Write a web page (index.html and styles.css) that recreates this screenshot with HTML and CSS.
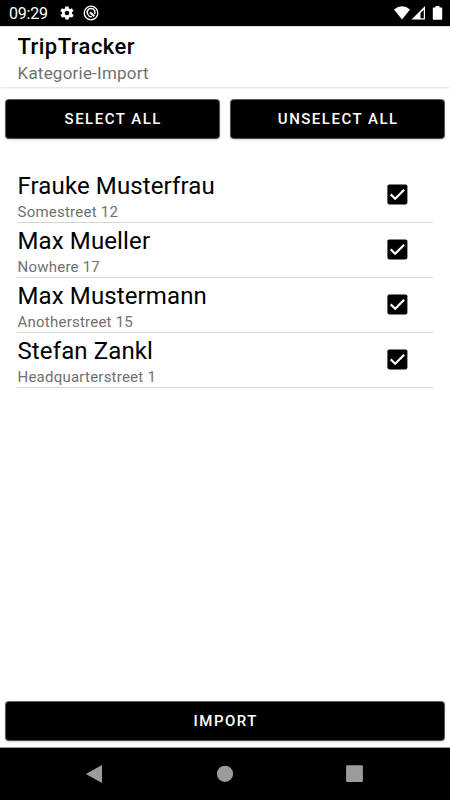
FILE: index.html
```html
<!DOCTYPE html>
<html lang="de">
<head>
<meta charset="utf-8">
<title>TripTracker</title>
<link rel="stylesheet" href="styles.css">
</head>
<body>
<div class="screen">
  <div class="status">
    <span class="clock">09:29</span>
    <svg class="gear" viewBox="0 0 24 24"><path fill="#fff" fill-rule="evenodd" d="M19.4 13c0-.3.1-.6.1-1s0-.7-.1-1l2.1-1.600c.2-.2.2-.4.1-.6l-2-3.500c-.1-.2-.4-.3-.6-.2l-2.500 1c-.5-.4-1.100-.7-1.700-1l-.4-2.600c0-.2-.2-.4-.5-.4h-4c-.2 0-.5.2-.5.4l-.4 2.600c-.6.300-1.200.6-1.700 1l-2.500-1c-.2-.1-.5 0-.6.2l-2 3.500c-.1.2-.1.5.1.6L4.600 11c0 .3-.1.7-.1 1s0 .7.1 1l-2.100 1.600c-.2.2-.2.4-.1.6l2 3.500c.1.2.4.3.6.2l2.500-1c.5.4 1.100.7 1.700 1l.4 2.600c0 .2.2.4.5.4h4c.2 0 .5-.2.5-.4l.4-2.600c.6-.3 1.200-.6 1.700-1l2.500 1c.2.1.5 0 .6-.2l2-3.500c.1-.2.1-.5-.1-.6L19.400 13zM12 15.500a3.500 3.500 0 1 1 0-7 3.500 3.500 0 0 1 0 7z"/></svg>
    <svg class="debug" viewBox="0 0 16 16"><g fill="none" stroke="#fff"><circle cx="8" cy="8" r="6.800" stroke-width="1.300"/><path stroke-width="1.700" d="M4.600 9.200A3.900 3.900 0 1 1 11.500 9.200"/><path stroke-width="2" d="M7 7.200L11.200 11.300"/><path stroke-width="1.300" d="M4.600 9.200L6.500 11.600H9"/></g></svg>
    <svg class="signals" viewBox="0 0 52 16"><path fill="#fff" d="M0 3.500Q8-3 16 3.500L8 13.500Z"/><path fill="#fff" fill-rule="evenodd" d="M17.500 13.500L31 0V13.500ZM26.500 12.300H29.800V3.800L26.500 7.100Z"/><path fill="#fff" d="M41.500 0h4v1.600h2q.7 0 .7.700V13q0 .7-.7.700h-8q-.7 0-.7-.7V2.300q0-.7.700-.7h2z"/></svg>
  </div>
  <header class="bar">
    <h1>TripTracker</h1>
    <p>Kategorie-Import</p>
  </header>
  <main>
    <div class="actions">
      <button>SELECT ALL</button>
      <button>UNSELECT ALL</button>
    </div>
    <ul class="list">
      <li><div><h2>Frauke Musterfrau</h2><p>Somestreet 12</p></div><svg class="check" viewBox="-.4 -.4 21 21"><rect width="20" height="20" rx="1.800"/><path d="M3.300 10L7.800 14.400L16.700 5.300"/></svg></li>
      <li><div><h2>Max Mueller</h2><p>Nowhere 17</p></div><svg class="check" viewBox="-.4 -.4 21 21"><rect width="20" height="20" rx="1.800"/><path d="M3.300 10L7.800 14.400L16.700 5.300"/></svg></li>
      <li><div><h2>Max Mustermann</h2><p>Anotherstreet 15</p></div><svg class="check" viewBox="-.4 -.4 21 21"><rect width="20" height="20" rx="1.800"/><path d="M3.300 10L7.800 14.400L16.700 5.300"/></svg></li>
      <li><div><h2>Stefan Zankl</h2><p>Headquarterstreet 1</p></div><svg class="check" viewBox="-.4 -.4 21 21"><rect width="20" height="20" rx="1.800"/><path d="M3.300 10L7.800 14.400L16.700 5.300"/></svg></li>
    </ul>
    <div class="import"><button>IMPORT</button></div>
  </main>
  <nav>
    <svg viewBox="0 0 18 18"><path d="M16 0.400V17.600Q16 18 15.500 17.700L.3 9.300Q0 9 .3 8.700L15.500.3Q16 0 16 .4Z"/></svg>
    <svg viewBox="0 0 18 18"><circle cx="9" cy="8.800" r="8.100"/></svg>
    <svg viewBox="0 0 18 18"><rect x=".1" y=".3" width="16.800" height="16.800" rx="1"/></svg>
  </nav>
</div>
</body>
</html>
```

FILE: styles.css
```css
* { box-sizing: border-box; margin: 0; padding: 0; }
body { font-family: Roboto, "Liberation Sans", sans-serif; background: #fff; }
.screen { width: 450px; height: 800px; display: flex; flex-direction: column; overflow: hidden; }
.status { height: 26px; background: #000; color: #fff; display: flex; align-items: center; padding-left: 9px; }
.clock { font-size: 16px; line-height: 26px; width: 50px; letter-spacing: -0.2px; padding-top: 1px; }
.gear { width: 16px; height: 16px; }
.debug { width: 16px; height: 16px; margin-left: 8px; }
.signals { width: 52px; height: 16px; margin: 1px 4px 0 auto; }
.bar { height: 61px; padding: 6px 17.500px 0; border-top: 1px solid #e2e2e2; box-shadow: 0 1px 2px rgba(0,0,0,.13); }
.bar h1 { font-size: 22px; line-height: 27px; font-weight: 500; letter-spacing: .45px; }
.bar p { font-size: 17px; line-height: 27px; color: #707070; letter-spacing: .22px; }
main { flex: 1; display: flex; flex-direction: column; min-height: 0; }
.actions { display: flex; gap: 12px; padding: 13px 6px 0; }
button { flex: 1; height: 38px; border: 0; border-radius: 3px; padding: 1px 0 0 1.500px; background: #000; color: #fff; font: 500 15px/37px Roboto, "Liberation Sans", sans-serif; letter-spacing: 1.500px; box-shadow: 0 0 0 1px rgba(0,0,0,.6), 0 1px 3px rgba(0,0,0,.35); }
.list { list-style: none; margin: 30px 17px 0; }
.list li { height: 55px; border-bottom: 1px solid #d6d6d6; display: flex; justify-content: space-between; padding: 4px 25px 0 .5px; }
.list h2 { font-size: 24px; line-height: 28px; font-weight: 400; letter-spacing: .12px; }
.list p { font-size: 15px; line-height: 24px; color: #707070; letter-spacing: .23px; }
.check { width: 21px; height: 21px; margin-top: 12px; }
.check path { fill: none; stroke: #fff; stroke-width: 2.200; }
.import { display: flex; margin-top: auto; padding: 0 6px 7px; }
nav { height: 53px; background: #000; border-top: 1px solid #999; display: flex; justify-content: center; align-items: center; gap: 112px; }
nav svg { width: 18px; height: 18px; fill: #9b9b9b; }
```
